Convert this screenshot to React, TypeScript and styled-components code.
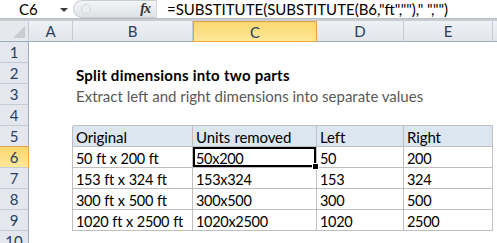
import styled, { createGlobalStyle, css } from 'styled-components'

const GlobalStyle = createGlobalStyle`
  html, body {
    margin: 0;
    padding: 0;
    background: #ffffff;
    overflow: hidden;
  }
  body {
    font-family: 'Lato', 'Liberation Sans', sans-serif;
  }
`

const COLS = [44, 120, 124, 87, 89, 60]
const LETTERS = ['A', 'B', 'C', 'D', 'E', 'F']

const Page = styled.div`
  width: 497px;
  height: 243px;
  overflow: hidden;
  display: flex;
  flex-direction: column;
`

const FormulaBar = styled.div`
  height: 20px;
  display: flex;
  align-items: stretch;
  background: #ffffff;
`

const NameBox = styled.div`
  width: 73px;
  display: flex;
  align-items: center;
  font-size: 15px;
  color: #000;
  padding-left: 19px;
  box-sizing: border-box;
  gap: 22px;
`

const DropArrow = styled.span`
  width: 0;
  height: 0;
  border-left: 4px solid transparent;
  border-right: 4px solid transparent;
  border-top: 4px solid #3c3c3c;
  margin-top: 2px;
`

const FxPill = styled.div`
  width: 84px;
  display: flex;
  align-items: center;
  justify-content: space-between;
  padding: 0 6px 0 7px;
  box-sizing: border-box;
  border-radius: 11px 0 0 11px;
  background: linear-gradient(#f4f5f7, #dfe2e6);
  border: 1px solid #c9ccd1;
  border-right-color: #d6d8dc;
`

const Knob = styled.span`
  width: 8px;
  height: 8px;
  border-radius: 50%;
  background: #eceef0;
  border: 1px solid #d3d6da;
`

const Fx = styled.span`
  font-family: 'Liberation Serif', serif;
  font-style: italic;
  font-weight: bold;
  font-size: 14px;
  color: #333;
  letter-spacing: -1px;
`

const FormulaText = styled.div`
  flex: 1;
  display: flex;
  align-items: center;
  padding-left: 10px;
  font-size: 15px;
  color: #000;
  white-space: pre;
`

const Divider = styled.div`
  height: 5px;
  box-sizing: border-box;
  border-top: 1px solid #b8bcc2;
  border-bottom: 2px solid #c9ccd1;
  background: #f4f5f6;
`

const Sheet = styled.div`
  display: grid;
  grid-template-columns: 29px ${COLS.map((c) => c + 'px').join(' ')};
  grid-auto-rows: 21px;
`

const headBase = css`
  box-sizing: border-box;
  display: flex;
  align-items: center;
  justify-content: center;
  font-size: 15px;
  color: #27405e;
  border-right: 1px solid #c5cbd3;
  border-bottom: 1px solid #c5cbd3;
`

const Corner = styled.div`
  ${headBase};
  position: relative;
  background: #e5e9ee;
  border-bottom-color: #9eabba;
  &::after {
    content: '';
    position: absolute;
    right: 3px;
    bottom: 3px;
    width: 0;
    height: 0;
    border-left: 12px solid transparent;
    border-bottom: 12px solid #c9cdd2;
  }
`

const ColHead = styled.div<{ $active?: boolean }>`
  ${headBase};
  background: ${(p) => (p.$active ? 'linear-gradient(#fbd770, #fee89a)' : 'linear-gradient(#eef1f5, #e2e6eb)')};
  border-bottom-color: ${(p) => (p.$active ? '#f2a73a' : '#9eabba')};
  ${(p) => p.$active && 'border: 1px solid #e3a04a; border-bottom: 1px solid #f2a73a;'}
`

const RowHead = styled.div<{ $active?: boolean }>`
  ${headBase};
  background: ${(p) => (p.$active ? 'linear-gradient(#fbd770, #fee89a)' : '#e4e8ee')};
  border-right-color: ${(p) => (p.$active ? '#f2a73a' : '#9eabba')};
  ${(p) => p.$active && 'border-top: 1px solid #e3a04a; margin-top: -1px; height: 22px;'}
`

const Cell = styled.div<{ $table?: boolean; $head?: boolean; $tone?: 'title' | 'sub'; $selected?: boolean }>`
  position: relative;
  box-sizing: border-box;
  display: flex;
  align-items: center;
  padding: 2px 0 0 3px;
  font-size: 15px;
  color: #000;
  white-space: nowrap;
  overflow: visible;
  ${(p) =>
    p.$table &&
    css`
      border-right: 1px solid #bfbfbf;
      border-bottom: 1px solid #bfbfbf;
      font-size: 14.5px;
      letter-spacing: -0.3px;
      word-spacing: 0.5px;
    `}
  ${(p) => p.$head && 'background: #dce6f1; font-size: 15px; letter-spacing: -0.1px;'}
  ${(p) => p.$tone === 'title' && 'font-weight: bold; letter-spacing: 0.25px;'}
  ${(p) => p.$tone === 'sub' && 'color: #595959;'}
  ${(p) =>
    p.$selected &&
    css`
      box-shadow: inset 0 0 0 2px #000;
    `}
`

const TableLeftEdge = styled.div`
  box-sizing: border-box;
  border-right: 1px solid #bfbfbf;
`

const TopBorder = styled.div`
  box-sizing: border-box;
  border-bottom: 1px solid #bfbfbf;
`

const Handle = styled.span`
  position: absolute;
  right: -3px;
  bottom: -3px;
  width: 5px;
  height: 5px;
  background: #000;
  border: 1px solid #fff;
  z-index: 2;
`

const table = [
  ['Original', 'Units removed', 'Left', 'Right'],
  ['50 ft x 200 ft', '50x200', '50', '200'],
  ['153 ft x 324 ft', '153x324', '153', '324'],
  ['300 ft x 500 ft', '300x500', '300', '500'],
  ['1020 ft x 2500 ft', '1020x2500', '1020', '2500'],
]

export default function App() {
  const rows: React.ReactNode[] = []
  for (let r = 1; r <= 10; r++) {
    const cells: React.ReactNode[] = []
    for (let c = 0; c < 6; c++) {
      const key = `${r}-${c}`
      const t = r >= 5 && r <= 9 && c >= 1 && c <= 4 ? table[r - 5][c - 1] : null
      if (t !== null) {
        cells.push(
          <Cell key={key} $table $head={r === 5} $selected={r === 6 && c === 2}>
            {t}
            {r === 6 && c === 2 && <Handle />}
          </Cell>
        )
      } else if (r === 4 && c >= 1 && c <= 4) {
        cells.push(<TopBorder key={key} />)
      } else if (r >= 5 && r <= 9 && c === 0) {
        cells.push(<TableLeftEdge key={key} />)
      } else if (r === 2 && c === 1) {
        cells.push(<Cell key={key} $tone="title">Split dimensions into two parts</Cell>)
      } else if (r === 3 && c === 1) {
        cells.push(<Cell key={key} $tone="sub">Extract left and right dimensions into separate values</Cell>)
      } else {
        cells.push(<Cell key={key} />)
      }
    }
    rows.push(
      <RowHead key={'h' + r} $active={r === 6}>
        {r}
      </RowHead>,
      ...cells
    )
  }

  return (
    <Page>
      <GlobalStyle />
      <FormulaBar>
        <NameBox>
          C6
          <DropArrow />
        </NameBox>
        <FxPill>
          <Knob />
          <Fx>fx</Fx>
        </FxPill>
        <FormulaText>{'=SUBSTITUTE(SUBSTITUTE(B6,"ft","")," ","")'}</FormulaText>
      </FormulaBar>
      <Divider />
      <Sheet>
        <Corner />
        {LETTERS.map((l) => (
          <ColHead key={l} $active={l === 'C'}>
            {l}
          </ColHead>
        ))}
        {rows}
      </Sheet>
    </Page>
  )
}
